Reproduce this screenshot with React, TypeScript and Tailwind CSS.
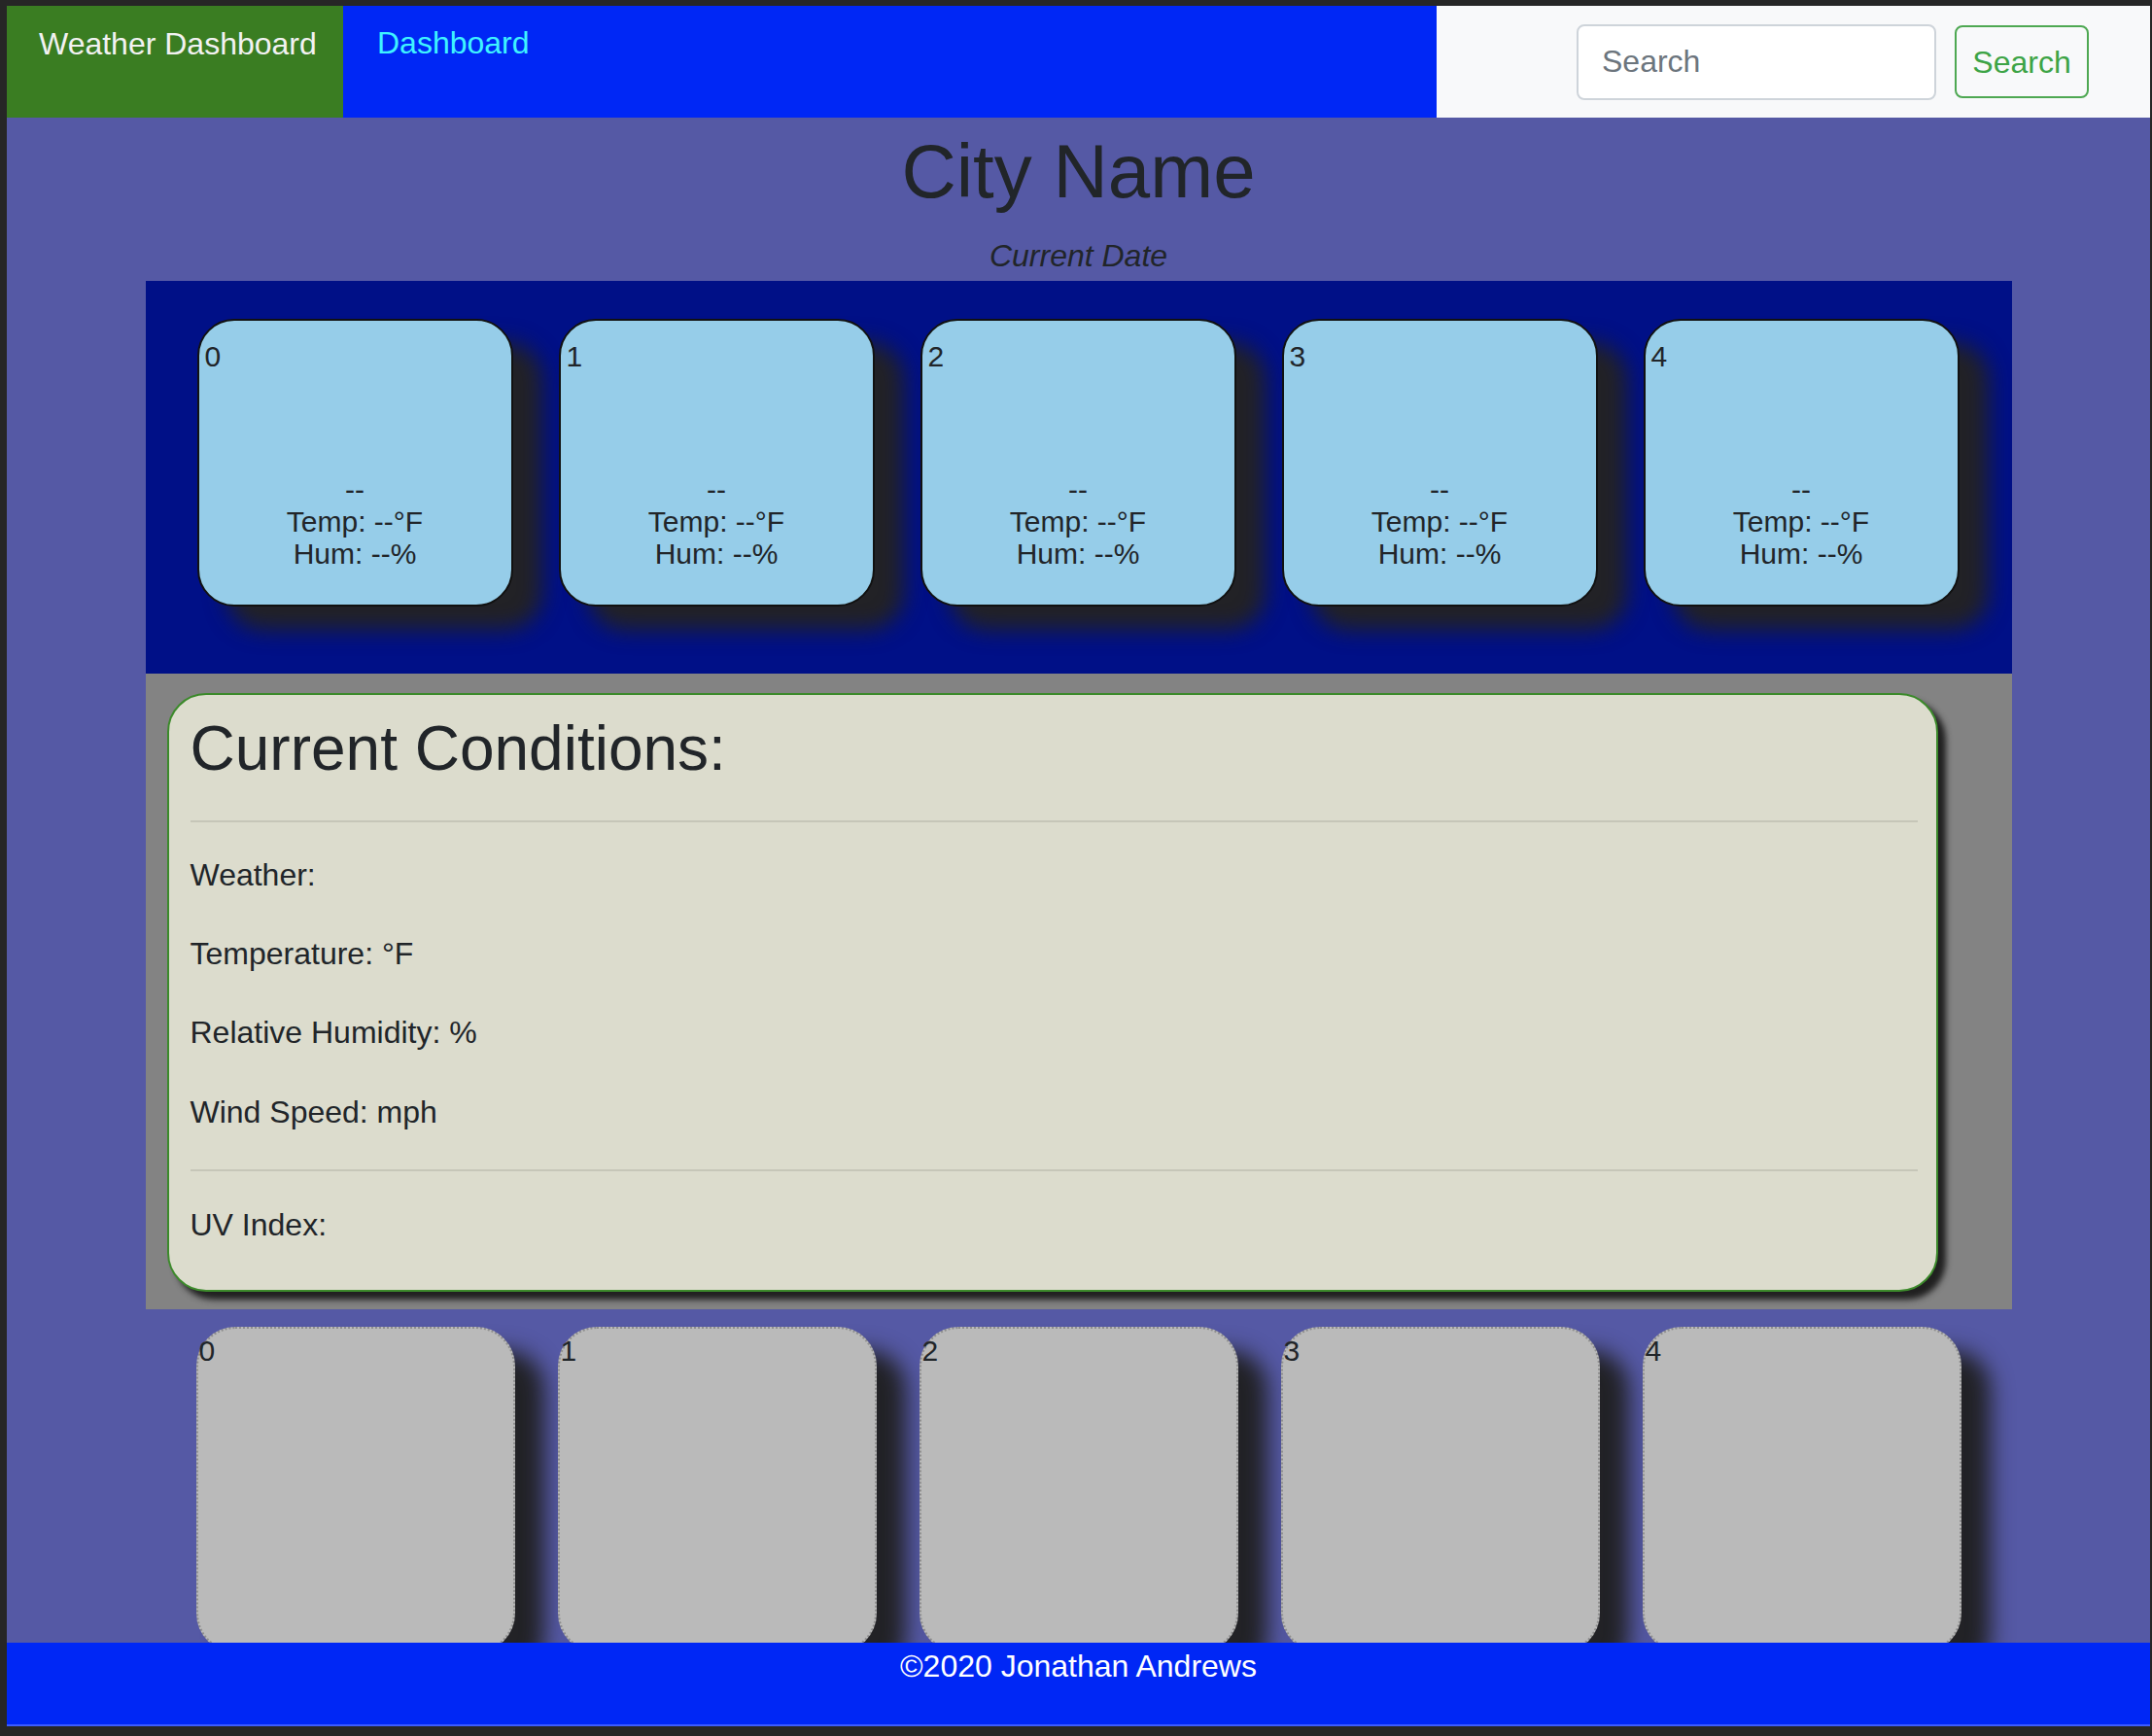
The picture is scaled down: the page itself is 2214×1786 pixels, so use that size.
import React from "react";

const idx = [0, 1, 2, 3, 4];

export default function App() {
  return (
    <div className="w-[2214px] h-[1786px] overflow-hidden bg-[#262626] pt-[6px] pl-[7px] pr-[2px] font-['Liberation_Sans',Arial,sans-serif]">
      <div className="relative h-[1770px] overflow-hidden bg-[#5559a5] text-[#212529]">
        <nav className="flex h-[115px]">
          <div className="w-[346px] bg-[#3a7d22] pl-[33px] pt-[15px] text-[32px] leading-[48px] text-[#f2f2f2]">
            Weather Dashboard
          </div>
          <div className="w-[1125px] bg-[#0027f5] pl-[35px] pt-[14px] text-[32px] leading-[48px] text-[#3ff3ff]">
            Dashboard
          </div>
          <div className="flex flex-1 items-center justify-end gap-[19px] bg-[#f8f9fa] pr-[63px]">
            <input
              placeholder="Search"
              className="h-[78px] w-[370px] rounded-[8px] border-2 border-[#ced4da] bg-white pl-[24px] text-[32px] outline-none placeholder:text-[#6c757d]"
            />
            <div className="flex h-[75px] w-[138px] items-center justify-center rounded-[8px] border-2 border-[#4ea852] text-[32px] text-[#3da446]">
              Search
            </div>
          </div>
        </nav>

        <h1 className="mt-[7px] text-center text-[78px] leading-[96px]">City Name</h1>
        <p className="mt-[15px] mb-[2px] text-center text-[32px] italic leading-[48px]">Current Date</p>

        <div className="mx-auto w-[1920px]">
          <div className="flex gap-[47px] bg-[#001087] pl-[53px] pt-[39px] pb-[69px]">
            {idx.map((i) => (
              <div
                key={i}
                className="flex h-[296px] w-[325px] flex-col rounded-[38px] border-2 border-[#111] bg-[#96cde9] px-[6px] pt-[20px] pb-[36px] text-[30px] leading-[33px] shadow-[30px_24px_22px_#222226]"
              >
                <div>{i}</div>
                <div className="mt-auto text-center">
                  <div>--</div>
                  <div>Temp: --°F</div>
                  <div>Hum: --%</div>
                </div>
              </div>
            ))}
          </div>

          <div className="bg-[#838383] pl-[22px] pt-[20px] pb-[18px]">
            <div className="w-[1822px] rounded-[40px] border-2 border-[#3c8a2b] bg-[#dcdccd] pl-[22px] pr-[19px] pt-[17px] pb-[43px] shadow-[8px_8px_6px_#202020]">
              <h2 className="text-[64px] leading-[77px]">Current Conditions:</h2>
              <div className="mt-[35px] h-[2px] bg-[#c6c6b8]" />
              <p className="mt-[30px] text-[32px] leading-[48px]">Weather: </p>
              <p className="mt-[33px] text-[32px] leading-[48px]">Temperature: °F</p>
              <p className="mt-[33px] text-[32px] leading-[48px]">Relative Humidity: %</p>
              <p className="mt-[34px] text-[32px] leading-[48px]">Wind Speed: mph</p>
              <div className="mt-[35px] h-[2px] bg-[#c6c6b8]" />
              <p className="mt-[31px] text-[32px] leading-[48px]">UV Index: </p>
            </div>
          </div>

          <div className="flex gap-[44px] pl-[52px] pt-[18px]">
            {idx.map((i) => (
              <div
                key={i}
                className="h-[335px] w-[328px] rounded-[40px] border-2 border-dotted border-[#8e8e8e] bg-[#bababa] px-[1px] pt-[6px] text-[30px] leading-[33px] shadow-[30px_24px_22px_#222226]"
              >
                {i}
              </div>
            ))}
          </div>
        </div>

        <footer className="absolute bottom-0 left-0 right-0 h-[86px] border-b-2 border-[#3d5cff] bg-[#0027f5] text-center text-[32px] leading-[48px] text-white">
          ©2020 Jonathan Andrews
        </footer>
      </div>
    </div>
  );
}
